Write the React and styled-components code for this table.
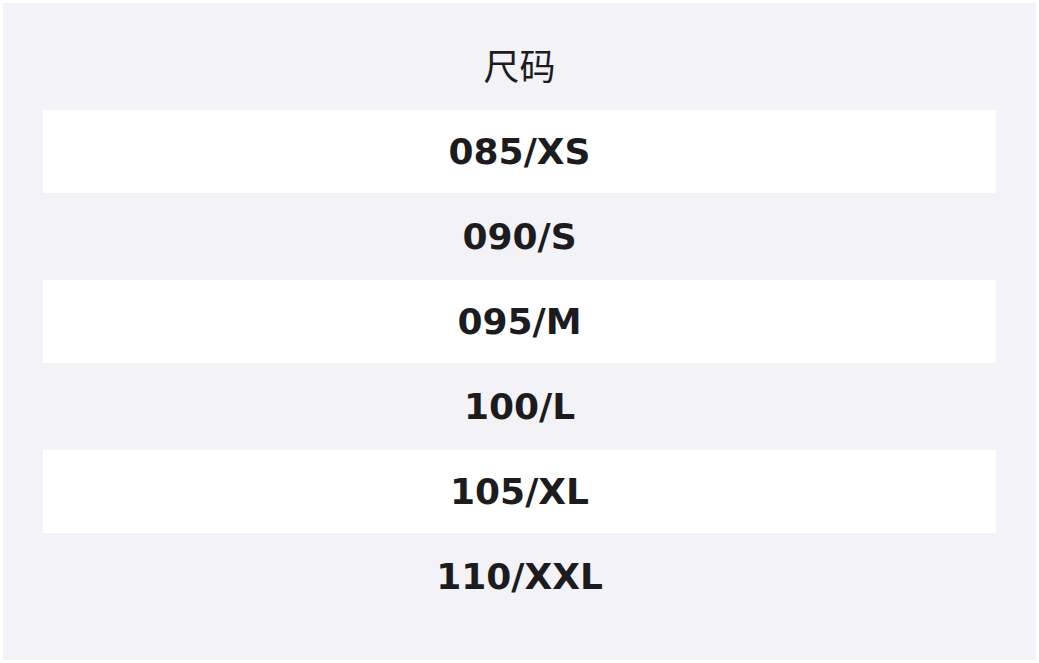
import React from "react";
import styled, { createGlobalStyle } from "styled-components";

const GlobalStyle = createGlobalStyle`
  html, body {
    margin: 0;
    padding: 0;
    background: #ffffff;
  }
  body {
    font-family: "DejaVu Sans", "Noto Sans CJK SC", sans-serif;
    color: #1c1c1e;
  }
`;

const Panel = styled.div`
  margin: 3px;
  height: 657px;
  box-sizing: border-box;
  background: #f2f2f7;
  padding: 0 40px 40px;
  display: flex;
  flex-direction: column;
`;

const Title = styled.div`
  padding: 37px 0 22px;
  line-height: 48px;
  font-size: 36px;
  font-family: "Noto Sans CJK SC", sans-serif;
  text-align: center;
  color: #1c1c1e;
`;

const SizeList = styled.div`
  display: flex;
  flex-direction: column;
`;

const SizeRow = styled.div`
  height: 85px;
  box-sizing: border-box;
  border-bottom: 2px solid transparent;
  background: ${(props) => (props.$striped ? "#ffffff" : "transparent")};
  background-clip: padding-box;
  display: flex;
  align-items: center;
  justify-content: center;
  font-size: 36px;
  font-weight: bold;
  color: #1c1c1e;
`;

const sizes = ["085/XS", "090/S", "095/M", "100/L", "105/XL", "110/XXL"];

const App = () => {
  return (
    <>
      <GlobalStyle />
      <Panel>
        <Title>尺码</Title>
        <SizeList>
          {sizes.map((size, index) => (
            <SizeRow key={size} $striped={index % 2 === 0}>
              {size}
            </SizeRow>
          ))}
        </SizeList>
      </Panel>
    </>
  );
};

export default App;
